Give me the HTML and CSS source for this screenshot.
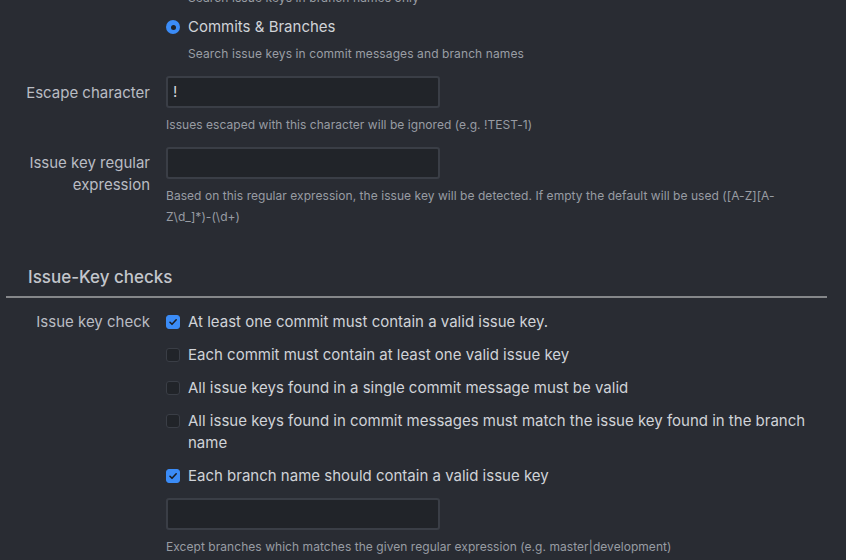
FILE: index.html
```html
<!DOCTYPE html>
<html>
<head>
<meta charset="utf-8">
<link rel="stylesheet" href="styles.css">
</head>
<body>
<div class="page">
  <div class="row">
    <div class="label"></div>
    <div class="control">
      <div class="option-desc cut">Search issue keys in branch names only</div>
      <label class="option">
        <span class="radio checked"></span>
        <span class="option-text">Commits &amp; Branches</span>
      </label>
      <div class="option-desc">Search issue keys in commit messages and branch names</div>
    </div>
  </div>

  <div class="row field">
    <div class="label">Escape character</div>
    <div class="control">
      <div class="input">!</div>
      <div class="help">Issues escaped with this character will be ignored (e.g. !TEST-1)</div>
    </div>
  </div>

  <div class="row field">
    <div class="label">Issue key regular expression</div>
    <div class="control">
      <div class="input"></div>
      <div class="help">Based on this regular expression, the issue key will be detected. If empty the default will be used ([A-Z][A-Z\d_]*)-(\d+)</div>
    </div>
  </div>

  <h2 class="section-title">Issue-Key checks</h2>

  <div class="row checks">
    <div class="label check-label">Issue key check</div>
    <div class="control">
      <label class="option check-row">
        <span class="checkbox checked"><svg viewBox="0 0 14 14" width="14" height="14"><path d="M4 7.3 L6 9.3 L10.2 4.8" fill="none" stroke="#1b1e24" stroke-width="1.6" stroke-linecap="round" stroke-linejoin="round"/></svg></span>
        <span class="option-text">At least one commit must contain a valid issue key.</span>
      </label>
      <label class="option check-row">
        <span class="checkbox"></span>
        <span class="option-text">Each commit must contain at least one valid issue key</span>
      </label>
      <label class="option check-row">
        <span class="checkbox"></span>
        <span class="option-text">All issue keys found in a single commit message must be valid</span>
      </label>
      <label class="option check-row">
        <span class="checkbox"></span>
        <span class="option-text">All issue keys found in commit messages must match the issue key found in the branch name</span>
      </label>
      <label class="option check-row">
        <span class="checkbox checked"><svg viewBox="0 0 14 14" width="14" height="14"><path d="M4 7.3 L6 9.3 L10.2 4.8" fill="none" stroke="#1b1e24" stroke-width="1.6" stroke-linecap="round" stroke-linejoin="round"/></svg></span>
        <span class="option-text">Each branch name should contain a valid issue key</span>
      </label>
      <div class="input"></div>
      <div class="help">Except branches which matches the given regular expression (e.g. master|development)</div>
    </div>
  </div>
</div>
</body>
</html>
```

FILE: styles.css
```css
html, body {
  margin: 0;
  padding: 0;
  background: #292c33;
  height: 100%;
  overflow: hidden;
}

.page {
  font-family: Inter, "Liberation Sans", sans-serif;
  color: #c3c6cc;
  width: 821px;
  padding: 0 19px 0 6px;
  margin-top: -11px;
}

.row {
  display: grid;
  grid-template-columns: 144px 1fr;
  column-gap: 16px;
}

.label {
  text-align: right;
  font-size: 15px;
  line-height: 22px;
  color: #b9bcc3;
}

.field {
  margin-top: 13px;
}

.field .label {
  padding-top: 6px;
}

.field + .field {
  margin-top: 12px;
}

.field + .field .label {
  padding-top: 5px;
}

.option-desc {
  padding-left: 22px;
  font-size: 12px;
  line-height: 18px;
  color: #9a9ea5;
  letter-spacing: 0.1px;
}

.option {
  display: flex;
  align-items: flex-start;
  gap: 8px;
  font-size: 15px;
  line-height: 22px;
  color: #d0d3d8;
  margin-top: 9px;
}

.option + .option-desc {
  margin-top: 7px;
}

.radio {
  flex: none;
  width: 14px;
  height: 14px;
  margin-top: 4px;
  border-radius: 50%;
  background: #3b8cf7;
  position: relative;
}

.radio.checked::after {
  content: "";
  position: absolute;
  left: 4.5px;
  top: 4.5px;
  width: 5px;
  height: 5px;
  border-radius: 50%;
  background: #1f2228;
}

.input {
  box-sizing: border-box;
  width: 274px;
  height: 32px;
  background: #212429;
  border: 2px solid #3a3e46;
  border-radius: 3px;
  font-size: 15px;
  line-height: 28px;
  padding-left: 5px;
  color: #d3d6db;
}

.help {
  margin-top: 6px;
  max-width: 630px;
  font-size: 12px;
  line-height: 21px;
  color: #989ca3;
  letter-spacing: 0.05px;
}

.section-title {
  margin: 38px 0 0 0;
  padding: 0 0 7px 22px;
  font-size: 17px;
  line-height: 24px;
  font-weight: 500;
  color: #c3c6cc;
  border-bottom: 2px solid #85878a;
}

.checks {
  margin-top: 13px;
}

.checks .option {
  margin-top: 0;
}

.checks .option + .option {
  margin-top: 11px;
}

.checkbox {
  flex: none;
  box-sizing: border-box;
  width: 14px;
  height: 14px;
  margin-top: 4px;
  border-radius: 3px;
  background: #212429;
  border: 1px solid #3a3e46;
  display: flex;
}

.checkbox.checked {
  background: #3b8cf7;
  border-color: #3b8cf7;
}

.checkbox svg {
  margin: -1px;
}

.checks .input {
  margin-top: 11px;
}
```
